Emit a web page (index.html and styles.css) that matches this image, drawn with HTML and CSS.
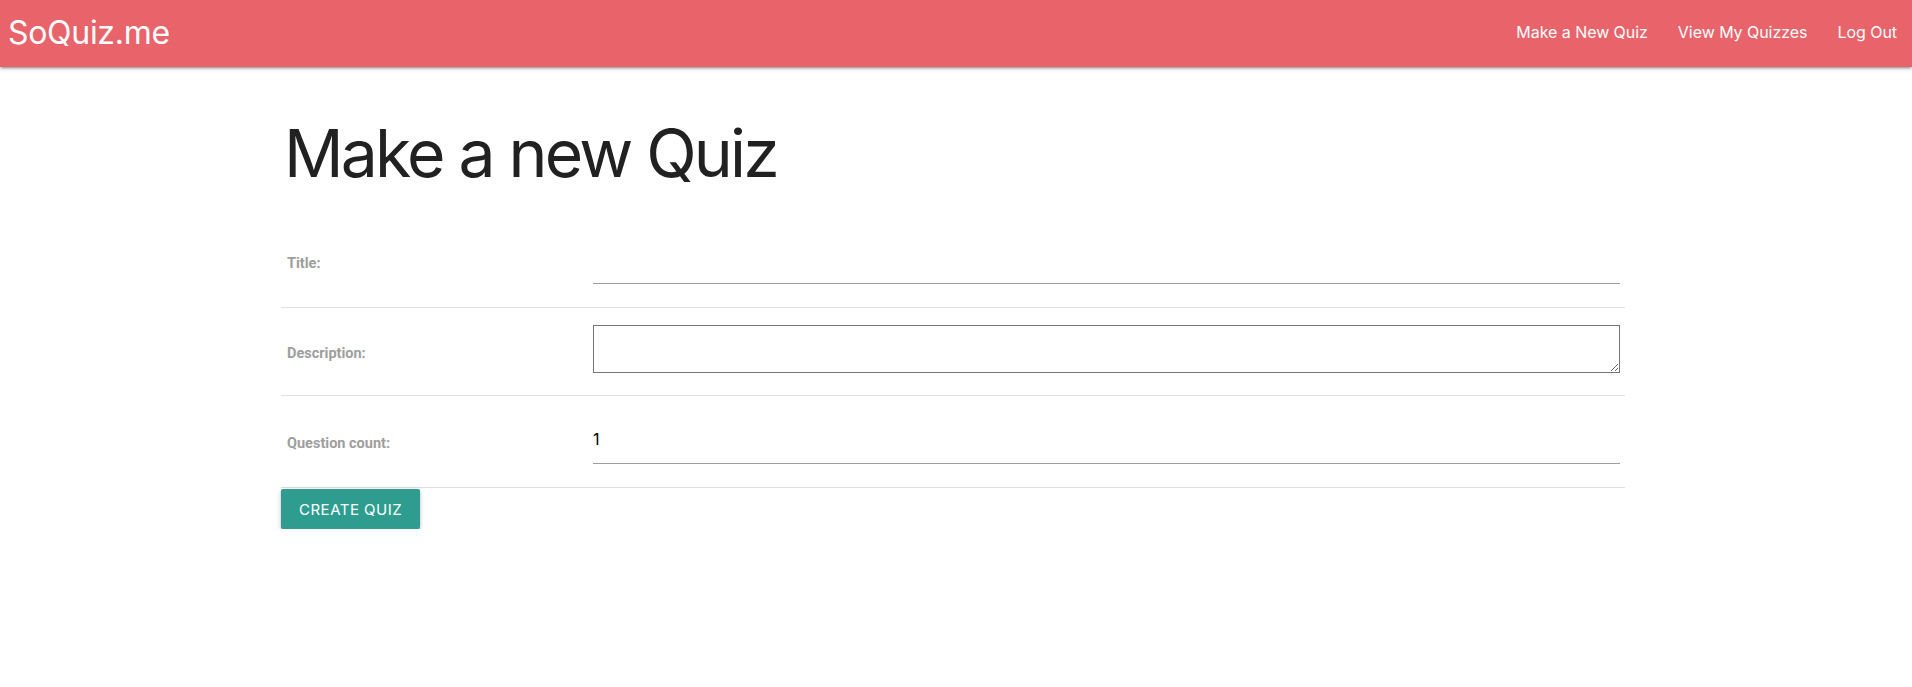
FILE: index.html
```html
<!DOCTYPE html>
<html lang="en">
<head>
<meta charset="utf-8">
<title>SoQuiz.me</title>
<link rel="stylesheet" href="styles.css">
</head>
<body>
<nav class="navbar">
  <a class="brand" href="#">SoQuiz.me</a>
  <ul class="nav-links">
    <li><a href="#">Make a New Quiz</a></li>
    <li><a href="#">View My Quizzes</a></li>
    <li><a href="#">Log Out</a></li>
  </ul>
</nav>
<main class="container">
  <h1 class="page-title">Make a new Quiz</h1>
  <form class="quiz-form">
    <table class="form-table">
      <tr class="row-input">
        <th class="label-cell"><label for="title">Title:</label></th>
        <td class="field-cell"><input id="title" class="line-input" type="text"></td>
      </tr>
      <tr class="row-area">
        <th class="label-cell"><label for="desc">Description:</label></th>
        <td class="field-cell"><textarea id="desc" class="area-input"></textarea></td>
      </tr>
      <tr class="row-input">
        <th class="label-cell"><label for="count">Question count:</label></th>
        <td class="field-cell"><input id="count" class="line-input" type="number" value="1"></td>
      </tr>
    </table>
    <button class="btn" type="submit">Create Quiz</button>
  </form>
</main>
</body>
</html>
```

FILE: styles.css
```css
* { box-sizing: border-box; }
html, body { margin: 0; padding: 0; }
body {
  font-family: Inter, "Noto Sans", sans-serif;
  color: rgba(0, 0, 0, 0.87);
  background: #fff;
}
.navbar {
  height: 67px;
  background: #e8636a;
  display: flex;
  align-items: center;
  justify-content: space-between;
  padding-left: 8px;
  box-shadow: 0 2px 2px 0 rgba(0,0,0,0.14), 0 3px 1px -2px rgba(0,0,0,0.12), 0 1px 5px 0 rgba(0,0,0,0.2);
  position: relative;
  z-index: 2;
}
.brand {
  color: #fff;
  text-decoration: none;
  font-size: 32px;
  font-weight: 400;
  letter-spacing: -0.3px;
  margin-top: -3px;
}
.nav-links {
  list-style: none;
  margin: -3px 0 0;
  padding: 0;
  display: flex;
}
.nav-links a {
  display: block;
  padding: 0 15px;
  color: #fff;
  text-decoration: none;
  font-size: 16px;
  letter-spacing: -0.05px;
}
.container {
  width: 1344px;
  margin-left: 281px;
}
.page-title {
  margin: 0;
  padding: 50px 3px 0;
  height: 149px;
  font-size: 66px;
  font-weight: 400;
  line-height: 1.1;
  letter-spacing: -2.8px;
  color: #212121;
}
.form-table {
  width: 100%;
  border-collapse: collapse;
}
.form-table tr {
  border-bottom: 1px solid rgba(0, 0, 0, 0.12);
}
.label-cell {
  width: 307px;
  text-align: left;
  padding: 3px 5px 0;
  font-family: Roboto, "Noto Sans", sans-serif;
  font-weight: 700;
  font-size: 14.5px;
  color: #9e9e9e;
}
.label-cell label { margin-left: 1px; }
.field-cell { padding: 19px 5px 15px; }
.row-area .field-cell { padding: 17px 5px 22px; }
.line-input {
  display: block;
  width: 100%;
  height: 49px;
  margin: 0 0 8px;
  padding: 0;
  border: none;
  border-bottom: 1px solid #9e9e9e;
  outline: none;
  background: transparent;
  font-family: Inter, "Noto Sans", sans-serif;
  font-size: 16px;
  color: #000;
}
.line-input::-webkit-outer-spin-button,
.line-input::-webkit-inner-spin-button { -webkit-appearance: none; margin: 0; }
.line-input[type=number] { -moz-appearance: textfield; }
.area-input {
  display: block;
  width: 100%;
  height: 48px;
  margin: 0;
  border: 1px solid #767676;
  border-radius: 0;
  resize: vertical;
  font-family: Inter, sans-serif;
}
.btn {
  display: block;
  margin-top: 1px;
  height: 40px;
  padding: 0 18px;
  border: none;
  border-radius: 2px;
  background: #2e9d8f;
  color: #fff;
  font-family: Inter, "Noto Sans", sans-serif;
  font-size: 15px;
  letter-spacing: 0.5px;
  text-transform: uppercase;
  box-shadow: 0 2px 2px 0 rgba(0,0,0,0.14), 0 3px 1px -2px rgba(0,0,0,0.12), 0 1px 5px 0 rgba(0,0,0,0.2);
  cursor: pointer;
}
```
